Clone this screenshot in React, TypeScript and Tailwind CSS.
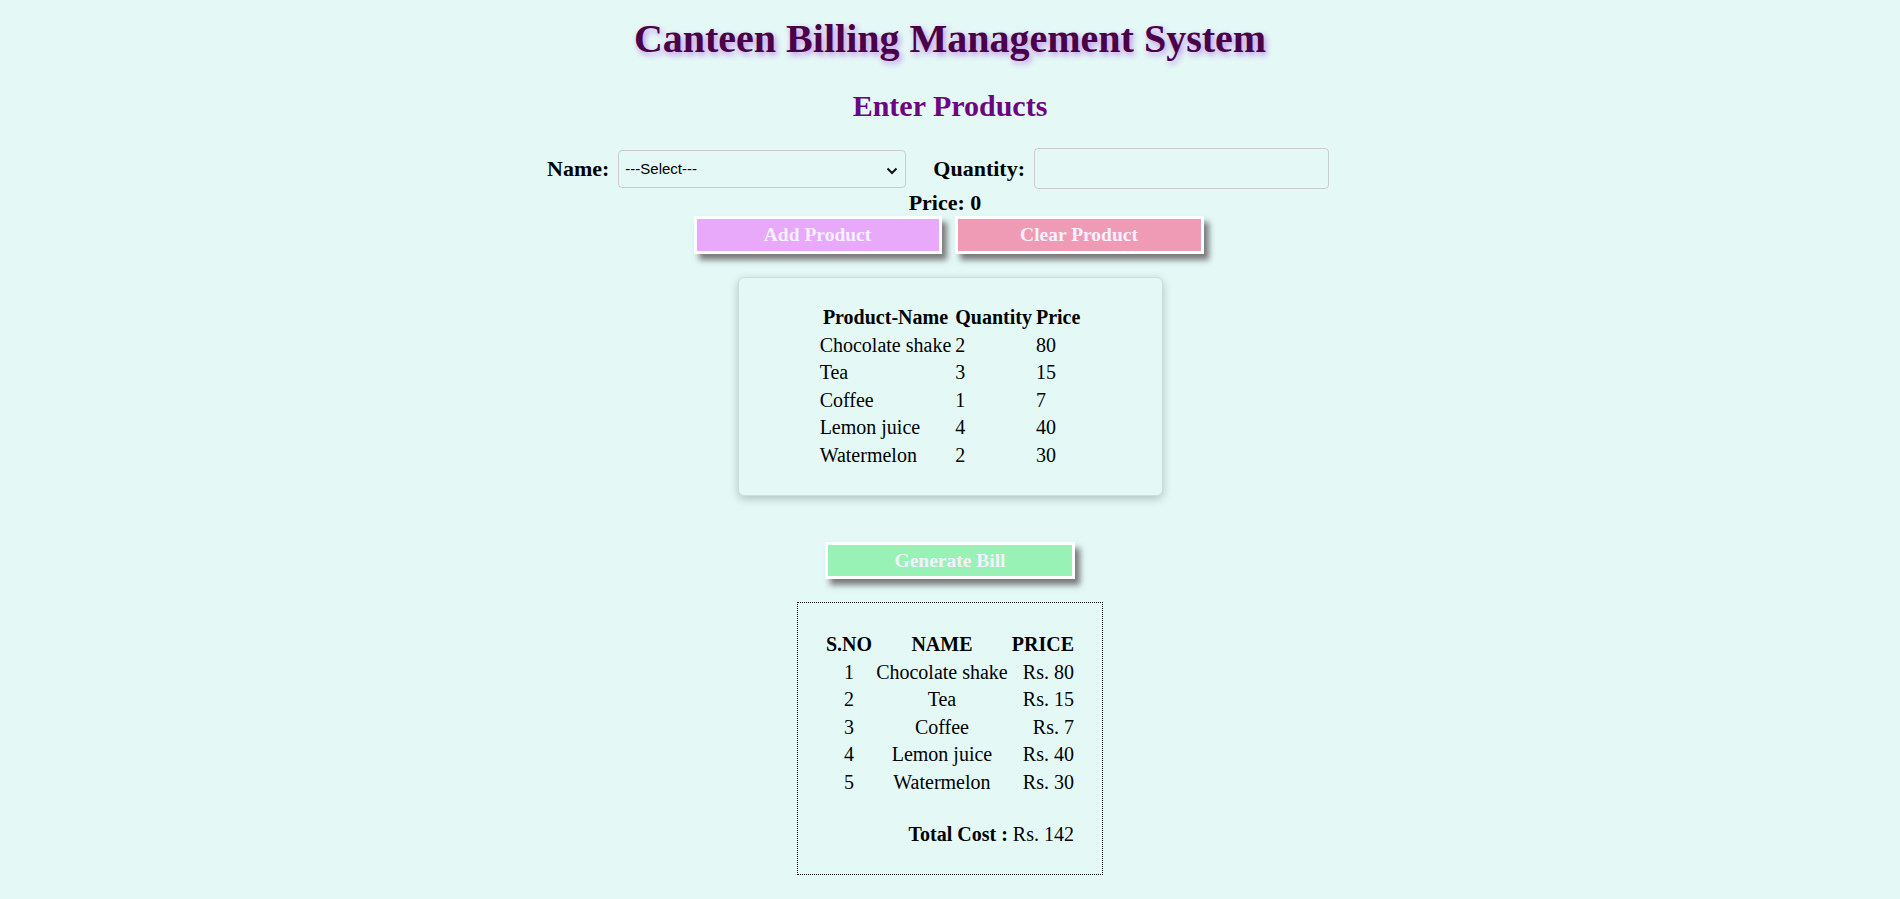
import React from "react";

const items = [
  { name: "Chocolate shake", qty: 2, price: 80 },
  { name: "Tea", qty: 3, price: 15 },
  { name: "Coffee", qty: 1, price: 7 },
  { name: "Lemon juice", qty: 4, price: 40 },
  { name: "Watermelon", qty: 2, price: 30 },
];

export default function App() {
  return (
    <div className="min-h-screen bg-[#e4f9f6] font-['Liberation_Serif','Times_New_Roman',serif] text-black text-[20px]">
      <div className="flex flex-col items-center">
        <h1 className="mt-[16px] h-[46px] leading-[46px] text-[40px] font-bold text-[#4a0047] [text-shadow:2px_3px_6px_#c08ae8]">
          Canteen Billing Management System
        </h1>
        <h2 className="mt-[26px] h-[35px] leading-[35px] text-[30px] font-bold text-[#6c0680]">
          Enter Products
        </h2>

        <div className="mt-[25px] w-full flex justify-center items-center pr-[24px] h-[41px]">
          <label className="text-[22px] leading-[25px] font-bold">Name:</label>
          <div className="relative ml-[9px] w-[288px] h-[38px] border border-[#cccccc] rounded-[4px] flex items-center pl-[6px]">
            <span className="font-['Liberation_Sans',Arial,sans-serif] text-[15px] leading-[18px] text-black">
              ---Select---
            </span>
            <svg
              className="absolute right-[7px] top-[16px]"
              width="12"
              height="8"
              viewBox="0 0 12 8"
              fill="none"
            >
              <path d="M1.5 1.5 L6 6 L10.5 1.5" stroke="#111" strokeWidth="2" />
            </svg>
          </div>
          <label className="ml-[27px] text-[22px] leading-[25px] font-bold">Quantity:</label>
          <input
            className="ml-[9px] w-[295px] h-[41px] border border-[#cccccc] rounded-[4px] bg-transparent outline-none"
            type="text"
          />
        </div>

        <div className="mt-[1px] w-full flex justify-center pr-[10px] h-[25px] text-[22px] leading-[25px] font-bold">
          Price: 0
        </div>

        <div className="mt-[1px] w-full flex justify-center gap-[13px] pr-[3px]">
          <button className="w-[248px] h-[38px] border-[3px] border-white bg-[#e8a9fb] text-[#f4f0ff] font-bold text-[19.5px] leading-[22px] shadow-[5px_6px_6px_#7a7a7a]">
            Add Product
          </button>
          <button className="w-[249px] h-[38px] border-[3px] border-white bg-[#f09bb5] text-[#f4f0ff] font-bold text-[19.5px] leading-[22px] shadow-[5px_6px_6px_#7a7a7a]">
            Clear Product
          </button>
        </div>

        <div className="mt-[23px] w-[425px] border border-[#cfdcdc] rounded-[6px] bg-[#e4f9f6] shadow-[0_3px_10px_rgba(0,0,0,0.22)] pt-[25px] pb-[25px]">
          <table className="mx-auto border-separate border-spacing-[2px] leading-[23.5px]">
            <thead>
              <tr>
                <th className="p-[1px] font-bold text-center">Product-Name</th>
                <th className="p-[1px] font-bold text-center">Quantity</th>
                <th className="p-[1px] font-bold text-center">Price</th>
              </tr>
            </thead>
            <tbody>
              {items.map((it) => (
                <tr key={it.name}>
                  <td className="p-[1px] text-left">{it.name}</td>
                  <td className="p-[1px] text-left">{it.qty}</td>
                  <td className="p-[1px] text-left">{it.price}</td>
                </tr>
              ))}
            </tbody>
          </table>
        </div>

        <button className="mt-[46px] w-[250px] h-[37px] border-[3px] border-white bg-[#98f2b6] text-[#f4f0ff] font-bold text-[19.5px] leading-[22px] shadow-[5px_6px_6px_#7a7a7a]">
          Generate Bill
        </button>

        <div className="mt-[23px] w-[306px] border border-dotted border-black pt-[27px] pb-[24px]">
          <table className="mx-auto border-separate border-spacing-[2px] leading-[23.5px]">
            <thead>
              <tr>
                <th className="p-[1px] font-bold text-center">S.NO</th>
                <th className="p-[1px] font-bold text-center">NAME</th>
                <th className="p-[1px] font-bold text-right">PRICE</th>
              </tr>
            </thead>
            <tbody>
              {items.map((it, i) => (
                <tr key={it.name}>
                  <td className="p-[1px] text-center">{i + 1}</td>
                  <td className="p-[1px] text-center">{it.name}</td>
                  <td className="p-[1px] text-right">Rs. {it.price}</td>
                </tr>
              ))}
              <tr>
                <td className="p-[1px] leading-[21px]" colSpan={3}>
                  &nbsp;
                </td>
              </tr>
              <tr>
                <td className="p-[1px] text-right" colSpan={3}>
                  <b>Total Cost :</b> Rs. 142
                </td>
              </tr>
            </tbody>
          </table>
        </div>
      </div>
    </div>
  );
}
